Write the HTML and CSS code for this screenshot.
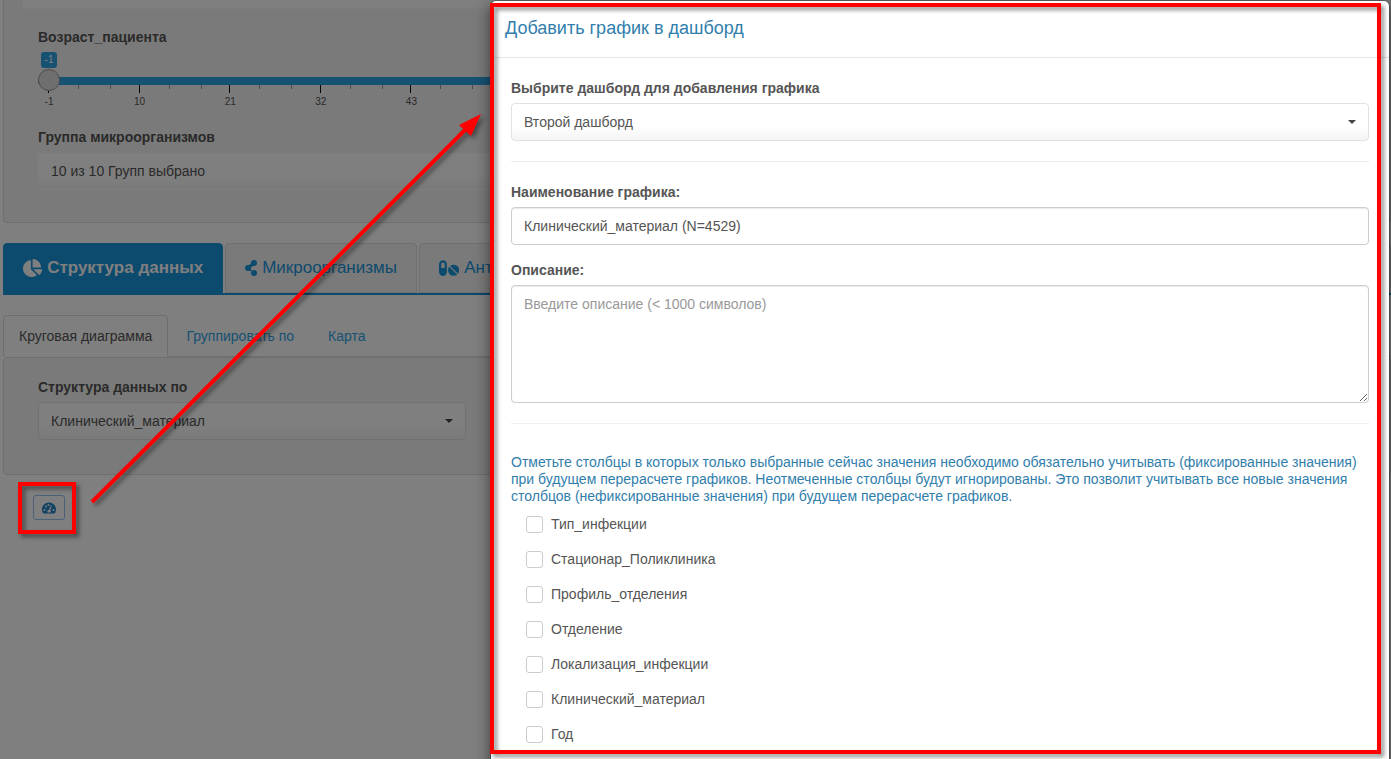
FILE: index.html
```html
<!DOCTYPE html>
<html lang="ru">
<head>
<meta charset="utf-8">
<title>Добавить график в дашборд</title>
<link rel="stylesheet" href="styles.css">
</head>
<body>
<main class="page">
  <section class="well filters">
    <div class="picker picker-top"></div>
    <span class="field-label" id="age-label">Возраст_пациента</span>
    <div class="slider" role="group" aria-labelledby="age-label">
      <span class="slider-value">-1</span>
      <div class="slider-bar"><button class="slider-handle" type="button" aria-label="Минимальный возраст"></button></div>
      <div class="slider-scale">
        <span class="mark">-1</span><span class="mark">10</span><span class="mark">21</span><span class="mark">32</span><span class="mark">43</span>
      </div>
    </div>
    <label class="field-label" for="groups">Группа микроорганизмов</label>
    <select class="control picker" id="groups"><option>10 из 10 Групп выбрано</option></select>
  </section>

  <nav class="main-tabs">
    <a class="main-tab active" href="#structure"><svg class="icon" viewBox="0 0 544 512"><path d="M527.79 288H290.5l158.03 158.03c6.04 6.04 15.98 6.53 22.19.68 38.7-36.46 65.32-85.61 73.13-140.86 1.34-9.46-6.51-17.85-16.06-17.85zm-15.83-64.8C503.72 103.74 408.26 8.28 288.8.04 279.68-.59 272 7.1 272 16.24V240h223.77c9.14 0 16.82-7.68 16.19-16.8zM224 288V50.71c0-9.55-8.39-17.4-17.84-16.06C86.99 51.49-4.1 155.6.14 280.37 4.5 408.51 114.83 513.59 243.03 511.98c50.4-.63 96.97-16.87 135.26-44.03 7.9-5.6 8.42-17.23 1.57-24.08L224 288z"/></svg>Структура данных</a>
    <a class="main-tab" href="#micro"><svg class="icon" viewBox="0 0 12 18"><path d="M3 9 9 4" stroke="currentColor" stroke-width="3"/><circle cx="9" cy="4" r="3"/><circle cx="3" cy="9" r="3"/><path d="M4 9 6 12" stroke="currentColor" stroke-width="2"/><circle cx="9" cy="14" r="3"/></svg>Микроорганизмы</a>
    <a class="main-tab wide" href="#anti"><svg class="icon" viewBox="0 0 576 512"><path d="M112 32C50.1 32 0 82.1 0 144v224c0 61.9 50.1 112 112 112s112-50.1 112-112V144c0-61.9-50.1-112-112-112zm48 224H64V144c0-26.5 21.5-48 48-48s48 21.5 48 48v112zm139.7-29.7c-3.5-3.5-9.4-3.1-12.3.8-45.3 62.5-40.4 150.1 15.9 206.4 56.3 56.3 143.9 61.2 206.4 15.9 4-2.9 4.3-8.8.8-12.3L299.7 226.3zm229.8-19c-56.3-56.3-143.9-61.2-206.4-15.9-4 2.9-4.3 8.8-.8 12.3l210.8 210.8c3.5 3.5 9.4 3.1 12.3-.8 45.3-62.6 40.5-150.1-15.9-206.4z"/></svg>Ант</a>
  </nav>

  <nav class="sub-tabs">
    <a class="sub-tab active" href="#pie">Круговая диаграмма</a>
    <a class="sub-tab" href="#group">Группировать по</a>
    <a class="sub-tab" href="#map">Карта</a>
  </nav>

  <section class="well structure">
    <label class="field-label" for="by">Структура данных по</label>
    <div class="select-box narrow"><select class="control picker" id="by"><option>Клинический_материал</option></select></div>
  </section>
  <button class="dash-button" type="button" aria-label="Добавить в дашборд">
    <svg class="gauge" viewBox="0 0 28 24"><path fill-rule="evenodd" d="M14 1C6.300 1 0 7.300 0 15c0 2.500.700 4.900 1.900 7 .300.600.900 1 1.500 1h21.200c.600 0 1.200-.400 1.500-1 1.200-2.100 1.900-4.500 1.900-7C28 7.300 21.700 1 14 1zM5 18a2 2 0 1 1 0-4 2 2 0 0 1 0 4zM8 11a2 2 0 1 1 0-4 2 2 0 0 1 0 4zM13 8a2 2 0 1 1 0-4 2 2 0 0 1 0 4zM17.800 6l1.800.600-3 9.600c1.300 1.300 1.200 3.300.300 4.800h-5.800c-1.400-2.500 0-5.400 2.900-5.500zM23 18a2 2 0 1 1 0-4 2 2 0 0 1 0 4z"/></svg>
  </button>
</main>

<div class="overlay">
  <form class="modal" role="dialog" aria-labelledby="modal-title">
    <header class="modal-header"><h1 class="modal-title" id="modal-title">Добавить график в дашборд</h1></header>
    <div class="modal-body">
      <label class="field-label" for="dash">Выбрите дашборд для добавления графика</label>
      <div class="select-box"><select class="control picker" id="dash"><option>Второй дашборд</option></select></div>
      <hr class="rule">
      <label class="field-label" for="name">Наименование графика:</label>
      <input class="control text" id="name" type="text" value="Клинический_материал (N=4529)">
      <label class="field-label" for="descr">Описание:</label>
      <textarea class="control text area" id="descr" placeholder="Введите описание (&lt; 1000 символов)"></textarea>
      <hr class="rule">
      <p class="hint">Отметьте столбцы в которых только выбранные сейчас значения необходимо обязательно учитывать (фиксированные значения) при будущем перерасчете графиков. Неотмеченные столбцы будут игнорированы. Это позволит учитывать все новые значения столбцов (нефиксированные значения) при будущем перерасчете графиков.</p>
      <div class="checks">
        <label class="check"><input type="checkbox">Тип_инфекции</label>
        <label class="check"><input type="checkbox">Стационар_Поликлиника</label>
        <label class="check"><input type="checkbox">Профиль_отделения</label>
        <label class="check"><input type="checkbox">Отделение</label>
        <label class="check"><input type="checkbox">Локализация_инфекции</label>
        <label class="check"><input type="checkbox">Клинический_материал</label>
        <label class="check"><input type="checkbox">Год</label>
      </div>
    </div>
  </form>
</div>

<div class="callout callout-modal"></div>
<div class="callout callout-button"></div>
<svg class="arrow" viewBox="0 0 400 400" aria-hidden="true"><path d="M2 397 377 23" stroke="#f00" stroke-width="4"/><path d="M391 9 381 31 369 20z" fill="#f00"/></svg>
</body>
</html>
```
FILE: styles.css
```css
* { box-sizing: border-box; }

body {
  margin: 0;
  height: 100vh;
  position: relative;
  overflow: hidden;
  background: #fff;
  color: #555;
  font: 14px/20px "Liberation Sans", Arial, sans-serif;
}

.page {
  height: 100%;
  padding-left: 3px;
  overflow: hidden;
}

.well {
  padding: 19px 34px 34px;
  background: #f5f5f5;
  border: 1px solid #dfdfdf;
  border-radius: 4px;
}

.filters {
  padding: 0 34px 32px;
  border-top: 0;
  border-radius: 0 0 4px 4px;
}

.field-label {
  display: block;
  margin-bottom: 5px;
  font-weight: bold;
}

.control {
  display: block;
  width: 100%;
  height: 38px;
  margin: 0;
  padding: 8px 12px;
  border: 1px solid #ccc;
  border-radius: 4px;
  background: #fff;
  color: #555;
  font: inherit;
}

.picker {
  appearance: none;
  border-color: #e2e2e2;
  background: linear-gradient(#fff, #fff 60%, #f5f5f5);
}

.filters .picker { border-color: transparent; }

.picker-top {
  height: 10px;
  margin: 0 0 17px -15px;
}

.select-box { position: relative; }
.select-box.narrow { width: 428px; }
.select-box::after {
  content: "";
  position: absolute;
  top: 17px;
  right: 13px;
  border: 4px solid transparent;
  border-top-color: #444;
  border-bottom: 0;
  pointer-events: none;
}

.slider {
  margin-bottom: 19px;
  font-size: 10px;
}

.slider-value {
  display: block;
  width: 16px;
  margin: 0 3px 9px;
  border-radius: 3px;
  background: #2fa4e7;
  color: #fff;
  line-height: 16px;
  text-align: center;
}

.slider-bar {
  display: flex;
  align-items: center;
  height: 8px;
  background: #2fa4e7;
  border-radius: 4px 0 0 4px;
}

.slider-handle {
  flex: none;
  z-index: 1;
  width: 22px;
  height: 22px;
  margin-top: -2px;
  padding: 0;
  border: 1px solid #999;
  border-radius: 50%;
  background: #dedede;
}

.slider-scale {
  display: grid;
  grid-template-columns: repeat(10, 1fr);
  max-width: 906px;
  line-height: 12px;
}

.mark {
  width: 22px;
  padding-top: 11px;
  text-align: center;
  position: relative;
}

.mark::before {
  content: "";
  position: absolute;
  top: 0;
  left: 10px;
  width: 1px;
  height: 8px;
  background: #000;
}

.mark::after {
  content: "";
  position: absolute;
  top: 0;
  left: 40px;
  width: 31px;
  height: 4px;
  border: solid #999;
  border-width: 0 1px;
}

.main-tabs {
  display: flex;
  gap: 2px;
  margin-top: 20px;
  border-bottom: 2px solid #1995dc;
}

.main-tab {
  display: flex;
  align-items: center;
  height: 50px;
  padding: 0 19px;
  border: 1px solid #ddd;
  border-radius: 4px 4px 0 0;
  background: #f5f5f5;
  color: #1995dc;
  font-size: 17px;
  text-decoration: none;
}

.main-tab.active {
  border-color: #1995dc;
  background: #1995dc;
  color: #fff;
  font-weight: bold;
}

.main-tab.wide { flex: 1; }

.icon {
  height: 18px;
  margin-right: 5px;
  fill: currentColor;
}

.sub-tabs {
  display: flex;
  gap: 2px;
  margin-top: 20px;
  border-bottom: 1px solid #ddd;
}

.sub-tab {
  margin-bottom: -1px;
  padding: 10px 15px;
  border: 1px solid transparent;
  border-radius: 4px 4px 0 0;
  color: #2fa4e7;
  text-decoration: none;
}

.sub-tab.active {
  border-color: #ddd #ddd #fff;
  background: #fff;
  color: #555;
}

.dash-button {
  display: grid;
  place-items: center;
  width: 32px;
  height: 25px;
  margin: 20px 30px;
  padding: 0;
  border: 1px solid #92c1f0;
  border-radius: 3px;
  background: #fff;
  color: #2184c8;
}

.gauge {
  width: 14px;
  height: 12px;
  fill: currentColor;
}

.overlay {
  position: absolute;
  inset: 0;
  z-index: 2;
  display: flex;
  padding: 0 1px 0 490px;
  overflow: hidden;
  background: rgba(0, 0, 0, .5);
}

.modal {
  flex: 1;
  min-height: 110vh;
  border: 1px solid rgba(0, 0, 0, .2);
  border-radius: 6px;
  background: #fff;
  background-clip: padding-box;
  box-shadow: 0 5px 15px rgba(0, 0, 0, .5);
}

.modal-header {
  padding: 17px 14px 18px;
  border-bottom: 1px solid #e5e5e5;
}

.modal-title {
  margin: 0;
  color: #317eac;
  font-size: 18px;
  font-weight: normal;
  line-height: 21px;
}

.modal-body { padding: 20px; }

.rule {
  margin: 20px 0;
  border: 0;
  border-top: 1px solid #eee;
}

.text { box-shadow: inset 0 1px 1px rgba(0, 0, 0, .08); }
input.text { margin-bottom: 15px; }
.text::placeholder { color: #999; }
.area { height: 118px; }

.hint {
  margin: 30px 0 9px;
  color: #317eac;
  font-size: 14px;
  line-height: 17px;
}

.checks {
  display: grid;
  gap: 15px;
  padding-left: 15px;
}

.check {
  display: flex;
  align-items: center;
  gap: 8px;
}

.check input {
  appearance: none;
  width: 17px;
  height: 17px;
  margin: 0;
  border: 1px solid #ccc;
  border-radius: 3px;
  background: #fff;
}

.callout {
  position: absolute;
  z-index: 3;
  border: 4px solid #f00;
  filter: drop-shadow(3px 3px 2px rgba(0, 0, 0, .45));
  pointer-events: none;
}

.callout-modal { inset: 3px 10px 5px 490px; }

.callout-button {
  top: 482px;
  left: 18px;
  width: 58px;
  height: 52px;
}

.arrow {
  position: absolute;
  z-index: 3;
  top: 105px;
  left: 90px;
  width: 400px;
  height: 400px;
  filter: drop-shadow(3px 3px 2px rgba(0, 0, 0, .4));
  pointer-events: none;
}
```
